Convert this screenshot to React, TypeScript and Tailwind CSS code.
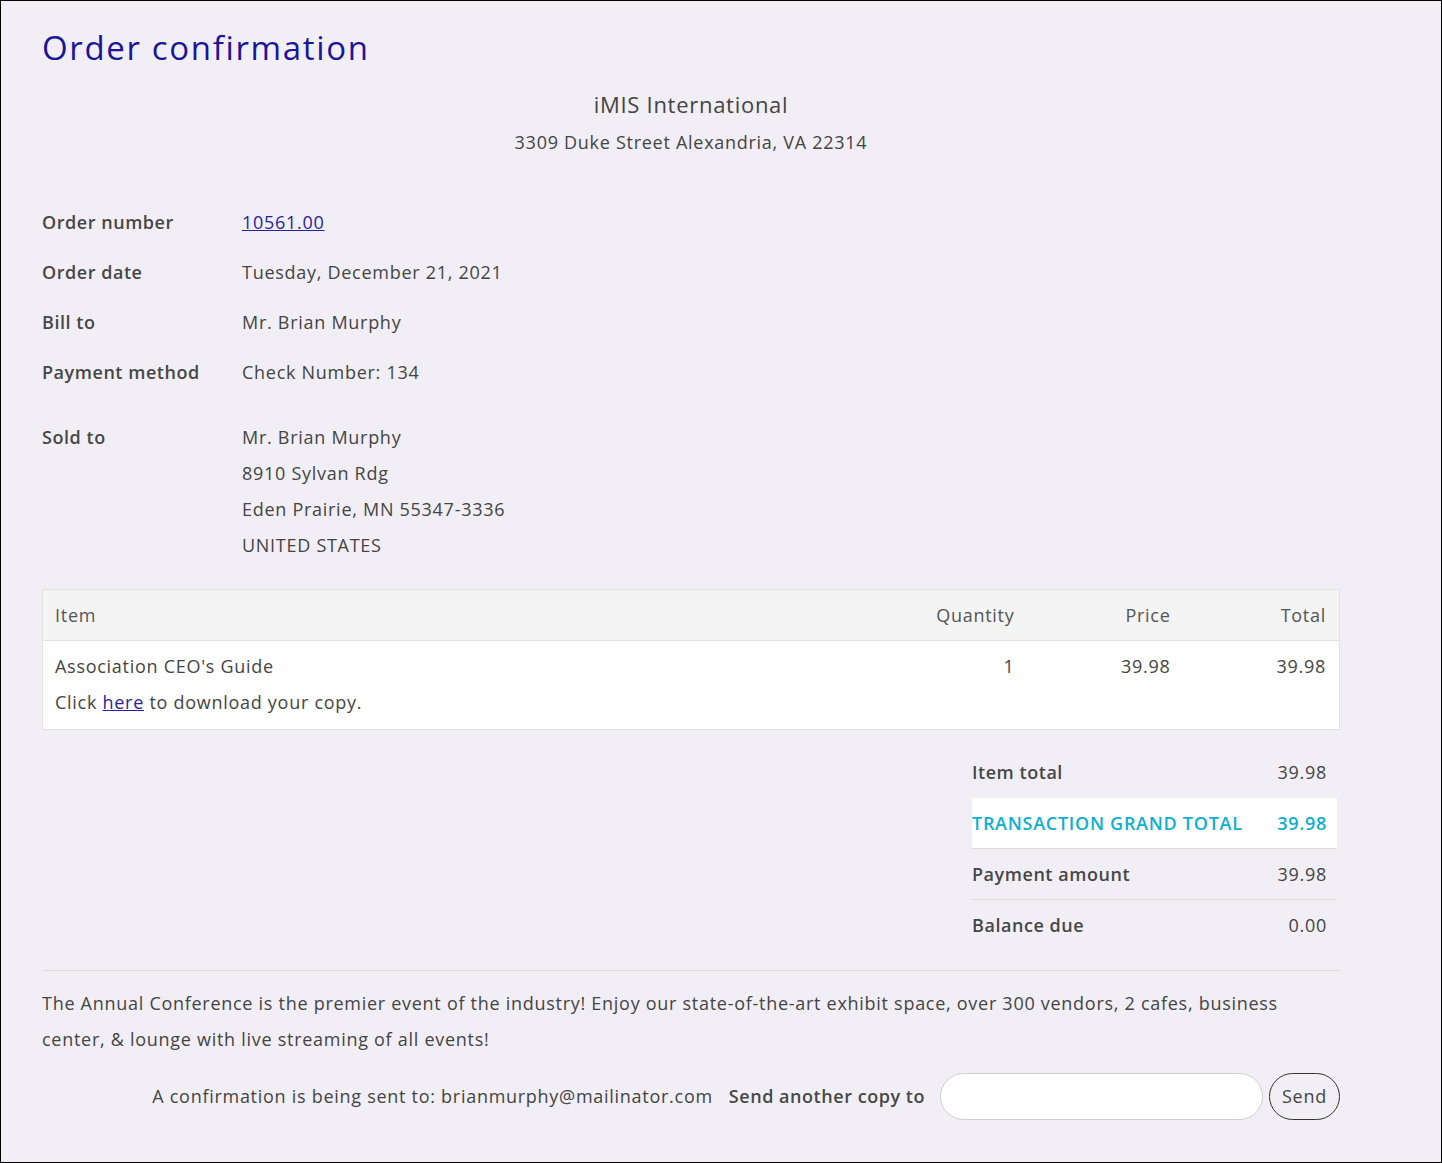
import type { ReactNode } from 'react'

const font = { fontFamily: '"Open Sans", "Noto Sans", Arial, sans-serif' }

function InfoRow({ label, children, className = '' }: { label: string; children: ReactNode; className?: string }) {
  return (
    <div className={`flex ${className}`}>
      <div className="w-[200px] shrink-0 font-semibold tracking-[0.03em] text-[#474747]">{label}</div>
      <div className="text-[#444]">{children}</div>
    </div>
  )
}

function SummaryRow({ label, value, grand, border }: { label: string; value: string; grand?: boolean; border?: boolean }) {
  return (
    <div
      className={`flex h-[51px] items-center justify-between pr-[10px] ${
        grand ? 'bg-white font-semibold text-[#0cb0cf]' : 'text-[#444]'
      } ${border ? 'border-b border-[#dcdcdc]' : ''}`}
    >
      <span className={grand ? '' : 'font-semibold tracking-[0.03em] text-[#474747]'}>{label}</span>
      <span>{value}</span>
    </div>
  )
}

export default function App() {
  return (
    <div className="min-h-screen border border-black bg-[#f1eff5] text-[18px] tracking-[0.04em]" style={font}>
      <div className="ml-[41px] w-[1298px] pb-10">
        <h1 className="mt-[26px] text-[33px] leading-[42px] tracking-[0.05em] text-[#1c1598]">Order confirmation</h1>

        <div className="mt-[20px] text-center text-[#444]">
          <div className="text-[22px] leading-[30px]">iMIS International</div>
          <div className="mt-[8px] leading-[30px]">3309 Duke Street Alexandria, VA 22314</div>
        </div>

        <div className="mt-[52px] flex flex-col leading-[26px]">
          <InfoRow label="Order number">
            <a href="#" className="text-[#2a1f9c] underline">10561.00</a>
          </InfoRow>
          <InfoRow label="Order date" className="mt-[24px]">Tuesday, December 21, 2021</InfoRow>
          <InfoRow label="Bill to" className="mt-[24px]">Mr. Brian Murphy</InfoRow>
          <InfoRow label="Payment method" className="mt-[24px]">Check Number: 134</InfoRow>
          <InfoRow label="Sold to" className="mt-[39px]">
            <div className="flex flex-col gap-[10px]">
              <span>Mr. Brian Murphy</span>
              <span>8910 Sylvan Rdg</span>
              <span>Eden Prairie, MN 55347-3336</span>
              <span>UNITED STATES</span>
            </div>
          </InfoRow>
        </div>

        <table className="mt-[31px] w-full border-collapse border border-[#e2e2e2] text-[#444]">
          <thead>
            <tr className="h-[51px] bg-[#f4f4f4] text-[#555]">
              <th className="px-[12px] text-left font-normal">Item</th>
              <th className="w-[156px] px-[13px] text-right font-normal">Quantity</th>
              <th className="w-[156px] px-[13px] text-right font-normal">Price</th>
              <th className="w-[156px] px-[13px] text-right font-normal">Total</th>
            </tr>
          </thead>
          <tbody className="bg-white">
            <tr className="border-t border-[#e2e2e2] align-top">
              <td className="px-[12px] pt-[12px] pb-[14px] leading-[26px]">
                <div>Association CEO's Guide</div>
                <div className="mt-[10px]">
                  Click <a href="#" className="text-[#2a1f9c] underline">here</a> to download your copy.
                </div>
              </td>
              <td className="px-[13px] pt-[12px] text-right leading-[26px]">1</td>
              <td className="px-[13px] pt-[12px] text-right leading-[26px]">39.98</td>
              <td className="px-[13px] pt-[12px] text-right leading-[26px]">39.98</td>
            </tr>
          </tbody>
        </table>

        <div className="mt-[17px] ml-[930px] w-[365px]">
          <SummaryRow label="Item total" value="39.98" />
          <SummaryRow label="TRANSACTION GRAND TOTAL" value="39.98" grand border />
          <SummaryRow label="Payment amount" value="39.98" border />
          <SummaryRow label="Balance due" value="0.00" />
        </div>

        <div className="mt-[19px] border-t border-[#dcdcdc] pt-[14px] leading-[36px] text-[#444]">
          The Annual Conference is the premier event of the industry! Enjoy our state-of-the-art exhibit space, over 300 vendors, 2 cafes, business center, &amp; lounge with live streaming of all events!
        </div>

        <div className="mt-[16px] flex items-center justify-end text-[#444]">
          <span>A confirmation is being sent to: brianmurphy@mailinator.com</span>
          <span className="ml-[16px] font-semibold tracking-[0.03em] text-[#474747]">Send another copy to</span>
          <input
            type="text"
            className="ml-[15px] h-[47px] w-[323px] rounded-full border border-[#cfcfcf] bg-white px-4 outline-none"
          />
          <button className="ml-[6px] h-[47px] w-[71px] rounded-full border border-[#333] text-[#444]">Send</button>
        </div>
      </div>
    </div>
  )
}
